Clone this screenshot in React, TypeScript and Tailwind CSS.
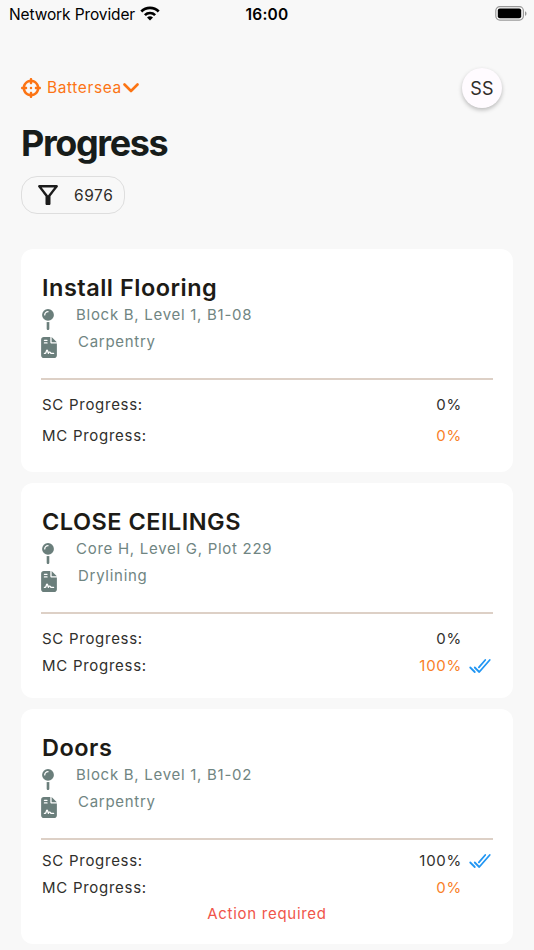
import { FaCrosshairs, FaFileContract, FaMapPin } from 'react-icons/fa6';
import { IoCheckmarkDone } from 'react-icons/io5';
import { MdOutlineFilterAlt } from 'react-icons/md';

type Task = {
  title: string;
  location: string;
  trade: string;
  sc: number;
  mc: number;
  actionRequired?: boolean;
};

const tasks: Task[] = [
  { title: 'Install Flooring', location: 'Block B, Level 1, B1-08', trade: 'Carpentry', sc: 0, mc: 0 },
  { title: 'CLOSE CEILINGS', location: 'Core H, Level G, Plot 229', trade: 'Drylining', sc: 0, mc: 100 },
  { title: 'Doors', location: 'Block B, Level 1, B1-02', trade: 'Carpentry', sc: 100, mc: 0, actionRequired: true },
];

function StatusBar() {
  return (
    <div className="grid h-7 grid-cols-3 items-center pl-[9px] pr-[7px] text-black">
      <div className="flex items-center gap-[5px]">
        <span className="whitespace-nowrap pt-px text-[15.5px] tracking-[-0.12px]">Network Provider</span>
        <svg className="-mt-px h-[15px] w-[20px] shrink-0" viewBox="0 0 20 15" fill="none" stroke="currentColor" strokeWidth="2.7">
          <path d="M1.3 5.5a12.4 12.4 0 0 1 17.4 0" />
          <path d="M4.9 9.1a7.3 7.3 0 0 1 10.2 0" />
          <path d="M10 14.6 7 11.6a4.4 4.4 0 0 1 6 0z" fill="currentColor" stroke="none" />
        </svg>
      </div>
      <span className="pr-[2px] pt-px text-center text-[15.5px] font-semibold tracking-[0.2px]">16:00</span>
      <svg className="-mt-[2px] h-[15px] w-[32px] justify-self-end" viewBox="0 0 32 15">
        <rect x="0.8" y="0.7" width="27.6" height="13.4" rx="4" fill="none" stroke="#999" strokeWidth="1.2" />
        <rect x="2.8" y="2.6" width="23.4" height="9.6" rx="2" fill="#000" />
        <path d="M30 5.2c2 .8 2 3.8 0 4.6z" fill="#999" />
      </svg>
    </div>
  );
}

function ProgressRow({ label, value, valueClass }: { label: string; value: number; valueClass: string }) {
  const done = value === 100;
  return (
    <div className={`flex items-center pl-px ${done ? 'h-[23px]' : 'h-[31px]'}`}>
      <span className="flex-1 text-[#302f2c]">{label}</span>
      <span className={valueClass}>{value}%</span>
      <span className="flex w-[31px] justify-end pr-px">
        {done && <IoCheckmarkDone className="mb-px text-[24px] text-[#2196f3] [&_*]:[stroke-width:38px]" />}
      </span>
    </div>
  );
}

function TaskCard({ task }: { task: Task }) {
  return (
    <div className="rounded-xl bg-white px-5 pb-5 pt-6 text-[15px] tracking-[0.72px]">
      <h2 className="h-7 pl-px text-[23.5px] font-semibold leading-[29px] tracking-[0.5px] text-[#1d1b16]">{task.title}</h2>
      <div className="flex h-7 items-center text-[#708582]">
        <FaMapPin className="mt-[9px] w-[14px] text-[21px] text-[#6a7e7b]" />
        <span className="pl-[21px]">{task.location}</span>
      </div>
      <div className="flex h-[27px] items-center text-[#708582]">
        <FaFileContract className="mt-[9px] w-4 text-[21px] text-[#6a7e7b]" />
        <span className="pl-[21px]">{task.trade}</span>
      </div>
      <div className="mb-[10px] mt-[22px] h-[2px] bg-[#ddd0c6]" />
      <ProgressRow label="SC Progress:" value={task.sc} valueClass="text-[#302f2c]" />
      <ProgressRow label="MC Progress:" value={task.mc} valueClass="text-[#f98028]" />
      {task.actionRequired && <p className="h-5 text-center leading-5 text-[#f0554a]">Action required</p>}
    </div>
  );
}

export default function App() {
  return (
    <div className="h-[950px] overflow-hidden bg-[#f8f8f8] font-['Inter',sans-serif]">
      <StatusBar />

      <header className="px-[21px] pt-10">
        <div className="flex h-10 items-center justify-between pr-[11px]">
          <button type="button" className="flex items-center text-[#fc7414]">
            <FaCrosshairs className="text-[20px]" />
            <span className="pl-[6px] text-[15.5px] tracking-[0.6px]">Battersea</span>
            <svg className="ml-[1px] h-[10px] w-4" viewBox="0 0 16 10" fill="none" stroke="currentColor" strokeWidth="2.6" strokeLinecap="round" strokeLinejoin="round">
              <path d="m1.5 1.5 6.5 6.5 6.5-6.5" />
            </svg>
          </button>
          <div className="flex size-10 items-center justify-center rounded-full bg-[#fffbff] text-[18px] tracking-[0.3px] text-[#302d29] shadow-[0_2px_4px_rgba(0,0,0,0.25)]">
            SS
          </div>
        </div>
        <h1 className="mt-[13px] text-[36px] font-bold leading-[44px] tracking-[-1.4px] text-[#171c1a]">Progress</h1>
        <button type="button" className="mt-[11px] flex h-[38px] w-[104px] items-center rounded-[16px] border border-[#dedede] pl-[11px] text-[#302d29]">
          <MdOutlineFilterAlt className="text-[30px] text-[#1c1c1c]" />
          <span className="pl-[11px] pt-px text-[15.5px] tracking-[0.6px]">6976</span>
        </button>
      </header>

      <main className="flex flex-col gap-[11px] px-[21px] pt-[35px]">
        {tasks.map(task => (
          <TaskCard key={task.title} task={task} />
        ))}
      </main>
    </div>
  );
}
